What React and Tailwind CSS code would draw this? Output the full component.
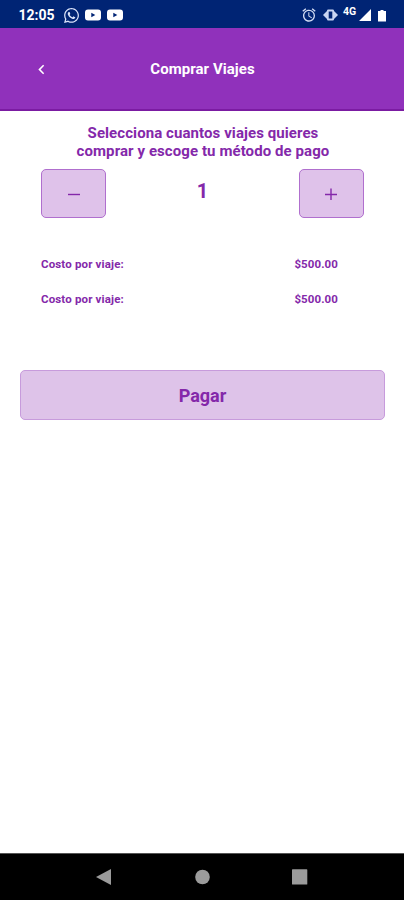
import React, { useState } from "react";
import { FaWhatsapp } from "react-icons/fa";
import { MdAlarm, MdChevronLeft } from "react-icons/md";

const PRICE = 500;

const formatPrice = (value) => `$${value.toFixed(2)}`;

const VideoIcon = () => (
    <svg width="16" height="12" viewBox="0 0 16 12" fill="#fff">
        <path fillRule="evenodd" d="M3 .5h10a3 3 0 0 1 3 3v5a3 3 0 0 1-3 3H3a3 3 0 0 1-3-3v-5a3 3 0 0 1 3-3ZM6.3 3.7v4.6L10.3 6Z" />
    </svg>
);

const StatusBar = () => (
    <div className="flex h-7 shrink-0 items-center bg-[#002474] pt-[2px] text-white">
        <span className="ml-[18.500px] w-[44.500px] text-[14px] leading-4 font-bold whitespace-nowrap">12:05</span>
        <FaWhatsapp size={17} className="mr-[5px] shrink-0 text-[#dbe4fa]" />
        <VideoIcon />
        <span className="w-1.5" />
        <VideoIcon />
        <div className="ml-auto flex items-center">
            <MdAlarm size={16} className="mr-[6px] text-[#d5def5]" />
            {/* vibration */}
            <svg width="15" height="12" viewBox="0 0 15 12" fill="#c9d5f3" className="mr-[5px]">
                <path d="M0 6 4 2v8ZM15 6l-4-4v8Z" />
                <path fillRule="evenodd" d="M5.2 .5h4.600A1.200 1.200 0 0 1 11 1.700v8.600a1.200 1.200 0 0 1-1.200 1.200H5.200A1.200 1.200 0 0 1 4 10.300v-8.600A1.200 1.200 0 0 1 5.200 .5ZM5.700 2.500v7h3.600v-7Z" />
            </svg>
            <span className="mr-0.5 w-3.5 pb-1.5 text-[10.5px] leading-3 font-bold">4G</span>
            {/* signal + battery */}
            <svg width="28" height="13" viewBox="0 0 28 13" fill="#fff" className="mr-[17px]">
                <path d="M12 0v12H0ZM19 2h2.500V1h3v1H27v10.500h-8Z" />
            </svg>
        </div>
    </div>
);

const Header = () => (
    <header className="grid h-[83px] shrink-0 grid-cols-[82px_1fr_82px] items-center border-b-2 border-[#7b1ba2] bg-[#9031bb] text-white">
        <button className="flex justify-center pt-0.5">
            <MdChevronLeft size={19} />
        </button>
        <h1 className="pl-px text-center text-[15px] leading-5 font-bold tracking-[0.05px]">Comprar Viajes</h1>
    </header>
);

const StepButton = ({ onClick, children }) => (
    <button
        onClick={onClick}
        className="flex h-[49px] w-[65px] items-center justify-center rounded-[5px] border border-[#b06fce] bg-[#dfc2ea]"
    >
        <svg width="12" height="12" viewBox="0 0 12 12" stroke="#8428aa" strokeWidth="1.4">
            {children}
        </svg>
    </button>
);

const CostRow = ({ label, value }) => (
    <div className="flex justify-between text-[11.5px] leading-[35px] font-bold">
        <span className="tracking-[0.15px]">{label}</span>
        <span className="tracking-[0.1px]">{value}</span>
    </div>
);

const NavBar = () => (
    <nav className="flex h-[47px] shrink-0 items-center justify-center border-t border-[#555] bg-black">
        <svg width="212" height="18" viewBox="0 0 212 18" fill="#9b9b9b">
            <path d="M0 9 15 1v16Z" />
            <circle cx="106.500" cy="9" r="7.3" />
            <rect x="196" y="1.3" width="15.3" height="15.3" rx=".6" />
        </svg>
    </nav>
);

export default function App() {
    const [trips, setTrips] = useState(1);

    return (
        <div className="flex h-screen w-full flex-col overflow-hidden bg-white font-['Roboto',sans-serif] text-[#8428aa]">
            <StatusBar />
            <Header />
            <main className="flex-1 pt-[13px] pr-[19px] pl-5">
                <h2 className="pl-px text-center text-[15px] leading-[18px] font-bold tracking-[0.08px]">
                    Selecciona cuantos viajes quieres
                    <br />
                    comprar y escoge tu método de pago
                </h2>
                <div className="mx-[21px] mt-[9px] flex justify-between">
                    <StepButton onClick={() => setTrips(Math.max(1, trips - 1))}>
                        <path d="M0 6.5h12" />
                    </StepButton>
                    <span className="text-xl leading-[45px] font-bold">{trips}</span>
                    <StepButton onClick={() => setTrips(trips + 1)}>
                        <path d="M0 6.5h12M6 .5v12" />
                    </StepButton>
                </div>
                <div className="mt-[29px] mr-[47px] ml-[21px]">
                    <CostRow label="Costo por viaje:" value={formatPrice(PRICE)} />
                    <CostRow label="Costo por viaje:" value={formatPrice(PRICE)} />
                </div>
                <button className="mt-[53px] h-[50px] w-full rounded-[5px] border border-[#c79bdc] bg-[#dec3e9] pt-0.5 text-lg font-bold">
                    Pagar
                </button>
            </main>
            <NavBar />
        </div>
    );
}
